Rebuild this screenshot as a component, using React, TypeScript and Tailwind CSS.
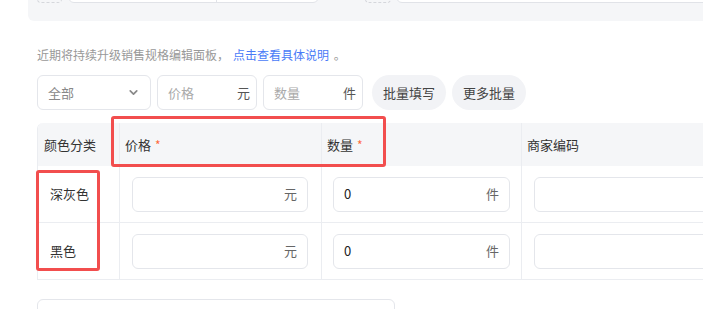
import React from "react";
import { ChevronDown } from "lucide-react";

const font = { fontFamily: '"Noto Sans CJK SC", "Noto Sans", Roboto, sans-serif' };

function SuffixInput({ value, suffix, placeholder }: { value?: string; suffix: string; placeholder?: string }) {
  return (
    <div className="flex h-[35px] w-full items-center justify-between rounded-[6px] border border-[#e4e6eb] bg-white px-[10px] text-[13px]">
      <span className={value ? "text-[#222]" : "text-[#aaa]"}>{value ?? placeholder ?? ""}</span>
      <span className="text-[#666]">{suffix}</span>
    </div>
  );
}

export default function App() {
  return (
    <div className="relative h-[309px] w-[703px] overflow-hidden bg-white" style={font}>
      {/* top panel (cut off) */}
      <div className="ml-[28px] flex h-[21px] items-end overflow-hidden rounded-bl-[6px] bg-[#f5f6f8] pb-[18px]">
        <div className="ml-[9px] h-[30px] w-[25px] shrink-0 rounded-b-[4px] border border-dashed border-[#d5d7dc]" />
        <div className="ml-[6px] flex h-[30px] w-[251px] shrink-0 rounded-b-[6px] border border-[#e1e3e8] bg-white">
          <div className="w-[148px] border-r border-[#e1e3e8]" />
        </div>
        <div className="ml-[46px] h-[30px] w-[26px] shrink-0 rounded-b-[4px] border border-dashed border-[#d5d7dc]" />
        <div className="ml-[5px] h-[30px] w-[320px] shrink-0 rounded-b-[6px] border border-[#e1e3e8] bg-white" />
      </div>

      <div className="pl-[37px]">
        <div className="mt-[24px] h-[20px] text-[12px] leading-[20px] text-[#999]">
          近期将持续升级销售规格编辑面板，
          <span className="ml-[4px] text-[#4a7bf7]">点击查看具体说明</span>
          <span className="ml-[2px]"> 。</span>
        </div>

        <div className="mt-[10px] flex h-[35px] items-center text-[13px]">
          <div className="flex h-[35px] w-[114px] items-center justify-between rounded-[6px] border border-[#e4e6eb] pl-[10px] pr-[10px] text-[#888]">
            <span>全部</span>
            <ChevronDown size={13} strokeWidth={3.2} className="text-[#8a8a8a]" />
          </div>
          <div className="ml-[6px] flex h-[35px] w-[100px] items-center justify-between rounded-[6px] border border-[#e4e6eb] pl-[10px] pr-[6px]">
            <span className="text-[#aaa]">价格</span>
            <span className="text-[#555]">元</span>
          </div>
          <div className="ml-[6px] flex h-[35px] w-[100px] items-center justify-between rounded-[6px] border border-[#e4e6eb] pl-[10px] pr-[6px]">
            <span className="text-[#aaa]">数量</span>
            <span className="text-[#555]">件</span>
          </div>
          <div className="ml-[9px] flex h-[35px] w-[74px] items-center justify-center rounded-full bg-[#f2f3f6] text-[#444]">批量填写</div>
          <div className="ml-[6px] flex h-[35px] w-[74px] items-center justify-center rounded-full bg-[#f2f3f6] text-[#444]">更多批量</div>
        </div>

        {/* table */}
        <div className="mt-[13px] w-[700px] overflow-hidden rounded-tl-[6px] border-b border-l border-[#ebedf1] text-[13px] text-[#333]">
          <div className="grid h-[43px] grid-cols-[81px_202px_200px_220px] bg-[#f5f6f8]">
            <div className="flex items-center pl-[6px]">颜色分类</div>
            <div className="flex items-center border-l border-[#ebedf1] pl-[5px]">
              价格<span className="ml-[4px] text-[12px] text-[#ff6a3d]">*</span>
            </div>
            <div className="flex items-center border-l border-[#ebedf1] pl-[5px]">
              数量<span className="ml-[4px] text-[12px] text-[#ff6a3d]">*</span>
            </div>
            <div className="flex items-center border-l border-[#ebedf1] pl-[5px]">商家编码</div>
          </div>
          {[
            { name: "深灰色" },
            { name: "黑色" },
          ].map((r, i) => (
            <div
              key={r.name}
              className={`grid grid-cols-[81px_202px_200px_220px] ${i === 0 ? "h-[56px]" : "h-[57px] border-t border-[#ebedf1]"}`}
            >
              <div className="flex items-center pl-[12px]">{r.name}</div>
              <div className="flex items-center border-l border-[#ebedf1] pl-[12px] pr-[13px]">
                <SuffixInput suffix="元" />
              </div>
              <div className="flex items-center border-l border-[#ebedf1] pl-[11px] pr-[11px]">
                <SuffixInput suffix="件" value="0" />
              </div>
              <div className="flex items-center border-l border-[#ebedf1] pl-[12px]">
                <div className="h-[35px] w-full rounded-[6px] border border-[#e4e6eb]" />
              </div>
            </div>
          ))}
        </div>

        <div className="mt-[19px] h-[30px] w-[358px] rounded-t-[6px] border border-[#e4e6eb]" />
      </div>

      {/* highlight boxes */}
      <div className="absolute left-[111px] top-[116px] h-[51px] w-[275px] rounded-[3px] border-[3px] border-[#f24e4e]" />
      <div className="absolute left-[36px] top-[170px] h-[101px] w-[64px] rounded-[3px] border-[3px] border-[#f24e4e]" />
    </div>
  );
}
